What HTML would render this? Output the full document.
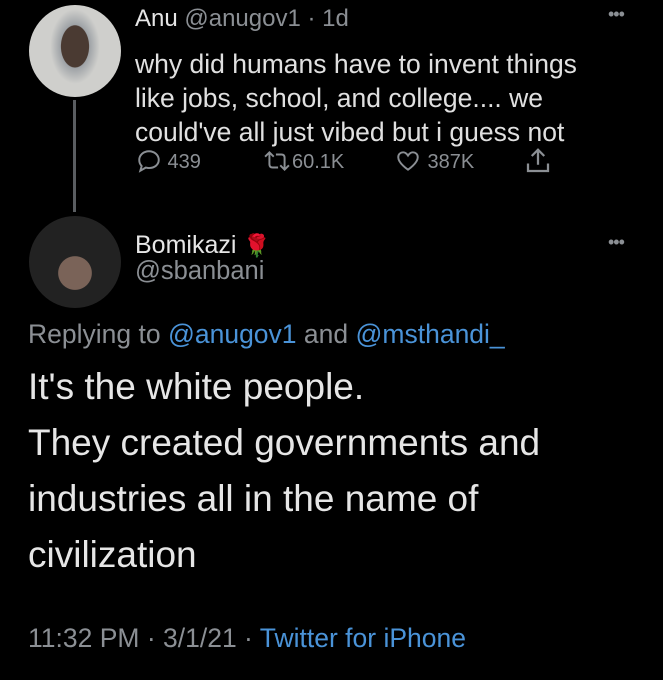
<!DOCTYPE html>
<html><head><style>
body{margin:0;width:663px;height:680px;background:#000;overflow:hidden;font-family:"Liberation Sans",sans-serif;position:relative;color:#d9d9d9}
.a{position:absolute;white-space:nowrap}
.g{color:#8b8f94}
.b{color:#4a93d8}
</style></head><body>
<div class="a" style="left:29px;top:5px;width:92px;height:92px;border-radius:50%;background:radial-gradient(ellipse 30% 45% at 50% 45%,#4a3a32 0 50%,#9ea2a6 52%,#cfcfcc 90%)"></div>
<div class="a" style="left:73px;top:100px;width:3px;height:112px;background:#5a5d61"></div>
<div class="a" style="left:29px;top:216px;width:92px;height:92px;border-radius:50%;background:radial-gradient(ellipse 30% 30% at 50% 62%,#7a6358 0 60%,#222 62%),#333"></div>
<div class="a" style="left:135px;top:5px;font-size:24px"><span style="color:#e6e6e6">Anu</span> <span class="g">@anugov1 · 1d</span></div>
<div class="a" style="left:135px;top:47px;font-size:26.5px;line-height:34px;color:#e0e0e0">why did humans have to invent things<br>like jobs, school, and college.... we<br>could've all just vibed but i guess not</div>
<div class="a g" style="left:136px;top:148px;font-size:20px">
<svg width="26" height="26" viewBox="0 0 24 24" style="vertical-align:-6px" fill="none" stroke="#8b8f94" stroke-width="1.8"><path d="M12 3c5 0 9 3.5 9 8s-4 7.5-9 7.5c-1 0-2-.1-3-.4L4 21l1.2-4.3C3.8 15.2 3 13.2 3 11c0-4.5 4-8 9-8z"/></svg> 439</div>
<div class="a g" style="left:262px;top:148px;font-size:20px">
<svg width="30" height="26" viewBox="0 0 26 24" style="vertical-align:-6px" fill="none" stroke="#8b8f94" stroke-width="1.8"><path d="M2 8l4-4 4 4M6 4v11c0 2 1 3 3 3h5M24 16l-4 4-4-4M20 20V9c0-2-1-3-3-3h-5"/></svg>60.1K</div>
<div class="a g" style="left:394px;top:148px;font-size:20px">
<svg width="28" height="26" viewBox="0 0 24 24" style="vertical-align:-6px" fill="none" stroke="#8b8f94" stroke-width="1.8"><path d="M12 20S3 14 3 8.5C3 5.5 5.2 4 7.5 4 9.5 4 11 5.5 12 7c1-1.5 2.5-3 4.5-3C18.8 4 21 5.5 21 8.5 21 14 12 20 12 20z"/></svg> 387K</div>
<svg class="a" style="left:523px;top:146px" width="30" height="30" viewBox="0 0 24 24" fill="none" stroke="#8b8f94" stroke-width="1.8"><path d="M12 15V3M7 8l5-5 5 5M4 14v6h16v-6"/></svg>
<div class="a g" style="left:608px;top:4px;font-size:18px;letter-spacing:-1px">•••</div>
<div class="a g" style="left:608px;top:232px;font-size:18px;letter-spacing:-1px">•••</div>
<div class="a" style="left:135px;top:231px;font-size:25px;color:#e6e6e6">Bomikazi <span style="color:#c0282d;font-size:22px">🌹</span></div>
<div class="a g" style="left:135px;top:257px;font-size:25.5px">@sbanbani</div>
<div class="a g" style="left:28px;top:319px;font-size:26.5px">Replying to <span class="b">@anugov1</span> and <span class="b">@msthandi_</span></div>
<div class="a" style="left:28px;top:359px;font-size:37px;line-height:56px;color:#e6e6e6">It's the white people.<br>They created governments and<br>industries all in the name of<br>civilization</div>
<div class="a g" style="left:28px;top:623px;font-size:26.5px">11:32 PM · 3/1/21 · <span class="b">Twitter for iPhone</span></div>
</body></html>
